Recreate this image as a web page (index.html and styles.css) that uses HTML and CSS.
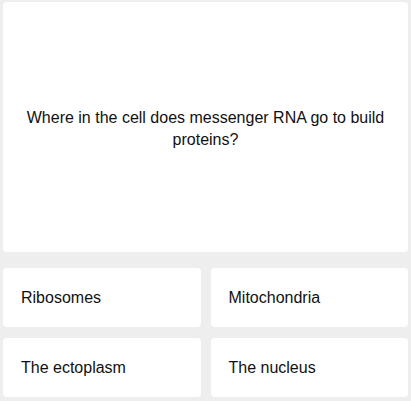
FILE: index.html
```html
<!DOCTYPE html>
<html>
<head>
<meta charset="utf-8">
<link rel="stylesheet" href="styles.css">
</head>
<body>
<div class="quiz">
  <div class="question">
    <p class="question-text">Where in the cell does messenger RNA go to build proteins?</p>
  </div>
  <div class="answers">
    <div class="answer">Ribosomes</div>
    <div class="answer">Mitochondria</div>
    <div class="answer">The ectoplasm</div>
    <div class="answer">The nucleus</div>
  </div>
</div>
</body>
</html>
```
FILE: styles.css
```css
html, body {
  margin: 0;
  padding: 0;
  background: #eeeeee;
}
body {
  font-family: "Liberation Sans", Arial, sans-serif;
  font-size: 16px;
  color: #111111;
}
.quiz {
  padding: 2px 3px 4px 3px;
  display: flex;
  flex-direction: column;
  gap: 16px;
}
.question {
  background: #ffffff;
  border-radius: 4px;
  height: 250px;
  display: flex;
  align-items: center;
  justify-content: center;
  padding: 4px 20px 0 20px;
  box-sizing: border-box;
}
.question-text {
  margin: 0;
  text-align: center;
  line-height: 22px;
}
.answers {
  display: grid;
  grid-template-columns: 1fr 1fr;
  column-gap: 10px;
  row-gap: 11px;
}
.answer {
  background: #ffffff;
  border-radius: 4px;
  height: 59px;
  display: flex;
  align-items: center;
  padding: 0 18px;
}
```
